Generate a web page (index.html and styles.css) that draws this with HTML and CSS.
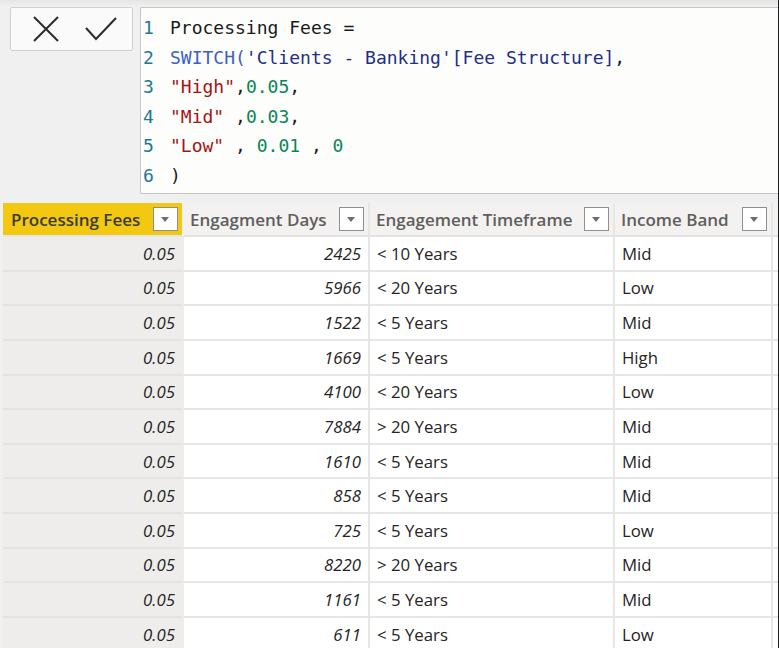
FILE: index.html
```html
<!DOCTYPE html>
<html>
<head>
<meta charset="utf-8">
<link rel="stylesheet" href="styles.css">
</head>
<body>
<div class="page">
  <div class="formula-bar">
    <div class="actions">
      <svg class="icon" width="30" height="28" viewBox="0 0 30 28"><path d="M3 2 L27 26 M27 2 L3 26" stroke="#2b2b2b" stroke-width="2" fill="none"/></svg>
      <svg class="icon" width="34" height="26" viewBox="0 0 34 26"><path d="M2 12 L12 23 L32 2" stroke="#2b2b2b" stroke-width="2" fill="none"/></svg>
    </div>
    <div class="editor">
      <div class="line"><span class="ln">1</span><span class="plain">Processing Fees =</span></div>
      <div class="line"><span class="ln">2</span><span class="fn">SWITCH(</span><span class="ref">'Clients - Banking'[Fee Structure]</span><span class="plain">,</span></div>
      <div class="line"><span class="ln">3</span><span class="str">"High"</span><span class="plain">,</span><span class="num">0.05</span><span class="plain">,</span></div>
      <div class="line"><span class="ln">4</span><span class="str">"Mid"</span><span class="plain"> ,</span><span class="num">0.03</span><span class="plain">,</span></div>
      <div class="line"><span class="ln">5</span><span class="str">"Low"</span><span class="plain"> , </span><span class="num">0.01</span><span class="plain"> , </span><span class="num">0</span></div>
      <div class="line"><span class="ln">6</span><span class="plain">)</span></div>
    </div>
  </div>

  <div class="table">
    <div class="row head">
      <div class="cell c1 selected"><span>Processing Fees</span><span class="filter"></span></div>
      <div class="cell c2"><span>Engagment Days</span><span class="filter"></span></div>
      <div class="cell c3"><span>Engagement Timeframe</span><span class="filter"></span></div>
      <div class="cell c4"><span>Income Band</span><span class="filter"></span></div>
      <div class="cell c5"></div>
    </div>
    <div class="row"><div class="cell c1 n">0.05</div><div class="cell c2 n">2425</div><div class="cell c3">&lt; 10 Years</div><div class="cell c4">Mid</div><div class="cell c5"></div></div>
    <div class="row"><div class="cell c1 n">0.05</div><div class="cell c2 n">5966</div><div class="cell c3">&lt; 20 Years</div><div class="cell c4">Low</div><div class="cell c5"></div></div>
    <div class="row"><div class="cell c1 n">0.05</div><div class="cell c2 n">1522</div><div class="cell c3">&lt; 5 Years</div><div class="cell c4">Mid</div><div class="cell c5"></div></div>
    <div class="row"><div class="cell c1 n">0.05</div><div class="cell c2 n">1669</div><div class="cell c3">&lt; 5 Years</div><div class="cell c4">High</div><div class="cell c5"></div></div>
    <div class="row"><div class="cell c1 n">0.05</div><div class="cell c2 n">4100</div><div class="cell c3">&lt; 20 Years</div><div class="cell c4">Low</div><div class="cell c5"></div></div>
    <div class="row"><div class="cell c1 n">0.05</div><div class="cell c2 n">7884</div><div class="cell c3">&gt; 20 Years</div><div class="cell c4">Mid</div><div class="cell c5"></div></div>
    <div class="row"><div class="cell c1 n">0.05</div><div class="cell c2 n">1610</div><div class="cell c3">&lt; 5 Years</div><div class="cell c4">Mid</div><div class="cell c5"></div></div>
    <div class="row"><div class="cell c1 n">0.05</div><div class="cell c2 n">858</div><div class="cell c3">&lt; 5 Years</div><div class="cell c4">Mid</div><div class="cell c5"></div></div>
    <div class="row"><div class="cell c1 n">0.05</div><div class="cell c2 n">725</div><div class="cell c3">&lt; 5 Years</div><div class="cell c4">Low</div><div class="cell c5"></div></div>
    <div class="row"><div class="cell c1 n">0.05</div><div class="cell c2 n">8220</div><div class="cell c3">&gt; 20 Years</div><div class="cell c4">Mid</div><div class="cell c5"></div></div>
    <div class="row"><div class="cell c1 n">0.05</div><div class="cell c2 n">1161</div><div class="cell c3">&lt; 5 Years</div><div class="cell c4">Mid</div><div class="cell c5"></div></div>
    <div class="row"><div class="cell c1 n">0.05</div><div class="cell c2 n">611</div><div class="cell c3">&lt; 5 Years</div><div class="cell c4">Low</div><div class="cell c5"></div></div>
  </div>
</div>
</body>
</html>
```

FILE: styles.css
```css
html, body {
  margin: 0;
  padding: 0;
  background: #f0f0f0;
  overflow: hidden;
}

.page {
  width: 778px;
  height: 648px;
  border-right: 1px solid #1a1a1a;
  background: #f0f0f0;
  overflow: hidden;
}

.formula-bar {
  display: flex;
  align-items: flex-start;
  gap: 7px;
  padding: 7px 0 0 10px;
  height: 187px;
  background: linear-gradient(#e6e6e6 0, #f0f0f0 7px, #f0f0f0 100%);
}

.actions {
  box-sizing: border-box;
  width: 123px;
  height: 44px;
  background: #fafafa;
  border: 1px solid #cfcfcf;
  border-radius: 2px;
  display: flex;
  align-items: center;
  padding-left: 20px;
  gap: 23px;
}

.icon {
  display: block;
}

.editor {
  box-sizing: border-box;
  flex: 1;
  height: 187px;
  background: #fdfdfb;
  border: 1px solid #c6c6c6;
  border-right: none;
  border-radius: 2px 0 0 2px;
  padding: 5px 0 0 2px;
  font-family: "DejaVu Sans Mono", "Liberation Mono", monospace;
  font-size: 18px;
  letter-spacing: 0;
}

.line {
  height: 29.6px;
  line-height: 29.6px;
  white-space: pre;
}

.ln {
  display: inline-block;
  width: 27px;
  color: #237893;
}

.plain { color: #1a1a1a; }
.fn { color: #3a62c4; }
.ref { color: #1f2f86; }
.str { color: #a31515; }
.num { color: #098658; }

.table {
  margin-top: 9px;
  padding-left: 3px;
  font-family: "Open Sans", "Noto Sans", sans-serif;
  font-size: 16.8px;
  color: #252423;
}

.row {
  display: grid;
  grid-template-columns: 181px 186px 245px 158px 5px;
  height: 34.64px;
}

.cell {
  box-sizing: border-box;
  display: flex;
  align-items: center;
  background: #ffffff;
  border-right: 2px solid #e6e6e6;
  border-bottom: 2px solid #e6e6e6;
  padding: 0 7px;
  white-space: nowrap;
  overflow: hidden;
}

.cell.c1 {
  background: #eeedec;
  border-right-color: #eeedec;
  border-bottom-color: #e4e3e2;
  padding-right: 7px;
}

.cell.c5 {
  border-right: none;
  padding: 0;
}

.cell.n {
  justify-content: flex-end;
  font-style: italic;
}

.head {
  height: 34px;
}

.head .cell {
  background: #f3f2f1;
  font-weight: 600;
  font-size: 17px;
  color: #605e5c;
  justify-content: space-between;
  padding: 0 4px 0 6px;
  border-bottom: 2px solid #e2e2e2;
}

.head .cell.c1 {
  border-right: 2px solid #f0f0f0;
  border-bottom: 2px solid #e6e6e6;
}

.head .cell.selected {
  background: #f2c811;
  color: #3b3a39;
  padding-left: 8px;
}

.filter {
  position: relative;
  box-sizing: border-box;
  width: 25px;
  height: 24px;
  background: #ffffff;
  border: 1px solid #8f8f8f;
  flex: none;
}

.filter::after {
  content: "";
  position: absolute;
  left: 7px;
  top: 9px;
  border-left: 4.5px solid transparent;
  border-right: 4.5px solid transparent;
  border-top: 5px solid #6e6e6e;
}
```
